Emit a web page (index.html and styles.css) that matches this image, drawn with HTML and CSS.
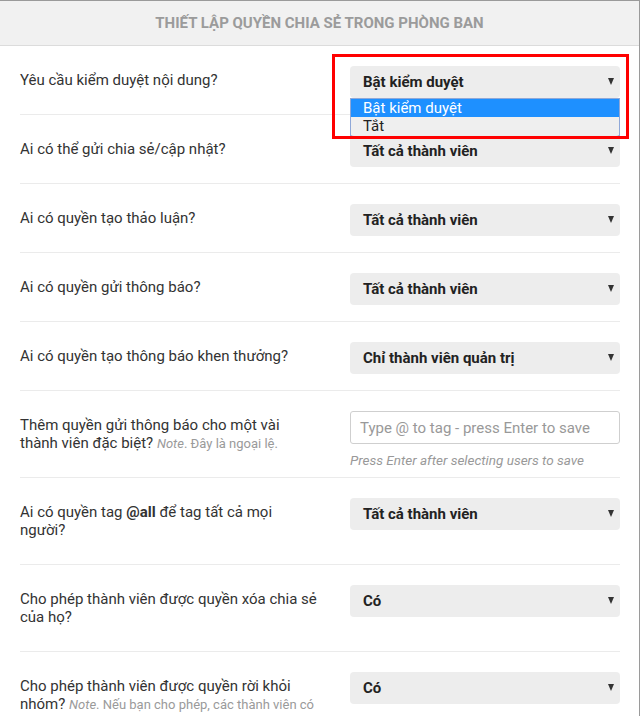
FILE: index.html
```html
<!DOCTYPE html>
<html lang="vi">
<head>
<meta charset="utf-8">
<title>Thiết lập quyền chia sẻ</title>
<link rel="stylesheet" href="styles.css">
</head>
<body>
<div class="panel">
  <div class="panel-head"><span class="title">THIẾT LẬP QUYỀN CHIA SẺ TRONG PHÒNG BAN</span></div>
  <div class="panel-body">
    <div class="row">
      <div class="label">Yêu cầu kiểm duyệt nội dung?</div>
      <div class="control">
        <div class="select"><span>Bật kiểm duyệt</span><i class="caret"></i></div>
        <ul class="options">
          <li class="opt active">Bật kiểm duyệt</li>
          <li class="opt">Tắt</li>
        </ul>
      </div>
    </div>
    <div class="row">
      <div class="label">Ai có thể gửi chia sẻ/cập nhật?</div>
      <div class="control"><div class="select"><span>Tất cả thành viên</span><i class="caret"></i></div></div>
    </div>
    <div class="row">
      <div class="label">Ai có quyền tạo thảo luận?</div>
      <div class="control"><div class="select"><span>Tất cả thành viên</span><i class="caret"></i></div></div>
    </div>
    <div class="row">
      <div class="label">Ai có quyền gửi thông báo?</div>
      <div class="control"><div class="select"><span>Tất cả thành viên</span><i class="caret"></i></div></div>
    </div>
    <div class="row">
      <div class="label">Ai có quyền tạo thông báo khen thưởng?</div>
      <div class="control"><div class="select"><span>Chỉ thành viên quản trị</span><i class="caret"></i></div></div>
    </div>
    <div class="row">
      <div class="label">Thêm quyền gửi thông báo cho một vài<br>thành viên đặc biệt? <span class="note"><em>Note</em>. Đây là ngoại lệ.</span></div>
      <div class="control">
        <div class="input">Type @ to tag - press Enter to save</div>
        <div class="help">Press Enter after selecting users to save</div>
      </div>
    </div>
    <div class="row">
      <div class="label">Ai có quyền tag <b>@all</b> để tag tất cả mọi<br>người?</div>
      <div class="control"><div class="select"><span>Tất cả thành viên</span><i class="caret"></i></div></div>
    </div>
    <div class="row">
      <div class="label">Cho phép thành viên được quyền xóa chia sẻ<br>của họ?</div>
      <div class="control"><div class="select"><span>Có</span><i class="caret"></i></div></div>
    </div>
    <div class="row">
      <div class="label">Cho phép thành viên được quyền rời khỏi<br>nhóm? <span class="note"><em>Note</em>. Nếu bạn cho phép, các thành viên có<br>thể tự rời khỏi nhóm.</span></div>
      <div class="control"><div class="select"><span>Có</span><i class="caret"></i></div></div>
    </div>
  </div>
  <div class="highlight"></div>
</div>
</body>
</html>
```
FILE: styles.css
```css
html, body {
  margin: 0;
  padding: 0;
  height: 100%;
  overflow: hidden;
  background: #fff;
}
body {
  font-family: Roboto, "Noto Sans", "Liberation Sans", sans-serif;
  color: #333;
}
.panel {
  position: relative;
  width: 639px;
  height: 715px;
  border-top: 1px solid #9a9a9a;
  border-right: 1px solid #9a9a9a;
  overflow: hidden;
}
.panel-head {
  height: 44px;
  background: #f1f1f1;
  border-bottom: 1px solid #dcdcdc;
  display: flex;
  align-items: center;
  justify-content: center;
}
.title {
  font-size: 15px;
  font-weight: 700;
  color: #9b9b9b;
}
.panel-body {
  padding: 0 19px 0 20px;
}
.row {
  display: flex;
  align-items: flex-start;
  gap: 10px;
  padding-top: 20px;
  border-bottom: 1px solid #ebebeb;
}
.label {
  width: 320px;
  height: 18px;
  min-height: 18px;
  padding: 5px 0 25px;
  font-size: 15px;
  line-height: 18px;
  color: #333;
  white-space: nowrap;
}
.label:has(br) {
  height: 36px;
}
.label b {
  font-weight: 700;
}
.note {
  font-size: 13px;
  line-height: 1;
  color: #9a9a9a;
}
.control {
  position: relative;
  flex: 1;
}
.select {
  height: 32px;
  border-radius: 4px;
  background: #ededed;
  display: flex;
  align-items: center;
  justify-content: space-between;
  padding: 0 6px 0 13px;
  font-size: 15px;
  font-weight: 700;
  color: #222;
}
.caret {
  width: 0;
  height: 0;
  border-left: 3.5px solid transparent;
  border-right: 3.5px solid transparent;
  border-top: 7px solid #333;
  margin-top: -1px;
}
.options {
  position: absolute;
  left: 0;
  right: 0;
  top: 32px;
  margin: 0;
  padding: 0;
  list-style: none;
  border: 1px solid #8fa8d8;
  background: #efefef;
}
.opt {
  height: 18px;
  line-height: 18px;
  padding-left: 12px;
  font-size: 15px;
  color: #222;
}
.opt.active {
  background: #1e90ff;
  color: #fff;
}
.input {
  height: 31px;
  border: 1px solid #cfcfcf;
  border-radius: 3px;
  display: flex;
  align-items: center;
  padding-left: 9px;
  font-size: 15px;
  color: #999;
}
.help {
  margin-top: 8px;
  font-size: 13.5px;
  font-style: italic;
  color: #999;
  line-height: 16px;
}
.highlight {
  position: absolute;
  left: 332px;
  top: 53px;
  width: 297px;
  height: 85px;
  box-sizing: border-box;
  border: 3px solid #ff0000;
}
```
